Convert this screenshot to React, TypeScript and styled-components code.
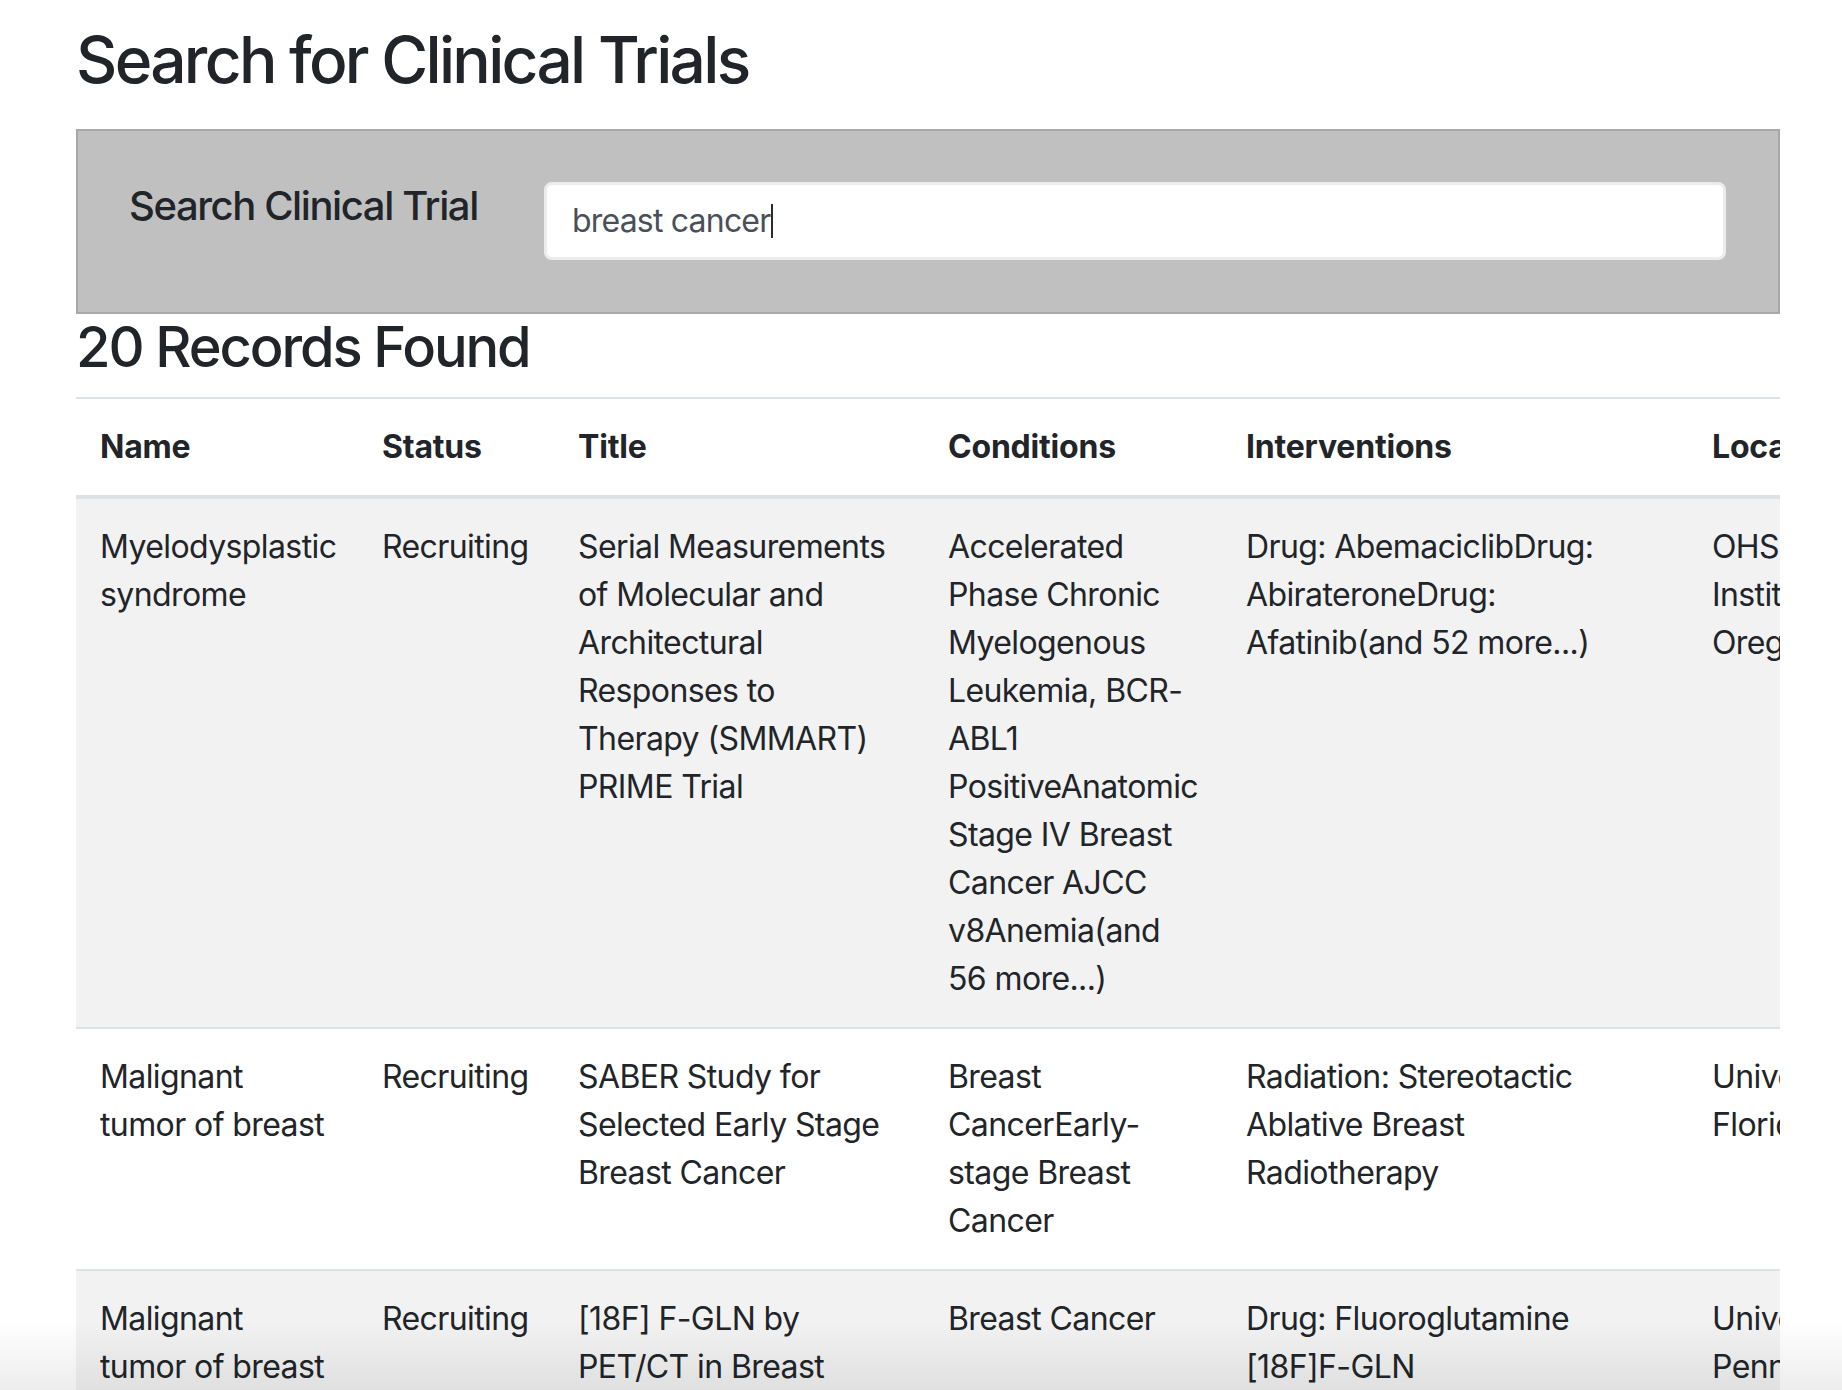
import React from "react";
import styled, { createGlobalStyle } from "styled-components";

const GlobalStyle = createGlobalStyle`
  html, body {
    margin: 0;
    padding: 0;
    background: #ffffff;
  }
  body {
    font-family: Inter, "Noto Sans", "Liberation Sans", Arial, sans-serif;
    color: #212529;
    font-size: 32px;
    line-height: 1.5;
    letter-spacing: -0.6px;
  }
  * { box-sizing: border-box; }
`;

const Page = styled.main`
  padding: 22px 62px 0 76px;
`;

const PageTitle = styled.h1`
  margin: 0 0 30px;
  font-size: 64px;
  font-weight: 500;
  line-height: 1.2;
  letter-spacing: -2.7px;
`;

const SearchPanel = styled.section`
  display: flex;
  align-items: flex-start;
  background: #c0c0c0;
  border: 2px solid #a8a8a8;
  padding: 51px 52px 52px 51px;
`;

const SearchLabel = styled.label`
  flex: 0 0 415px;
  font-size: 40px;
  font-weight: 500;
  line-height: 1.2;
  letter-spacing: -1.4px;
`;

const SearchField = styled.div`
  flex: 1;
  display: flex;
  align-items: center;
  height: 78px;
  padding: 0 25px;
  background: #ffffff;
  border: 3px solid #ececec;
  border-radius: 8px;
  font-size: 32px;
  letter-spacing: -0.8px;
  color: #495057;
`;

const Caret = styled.span`
  display: inline-block;
  width: 2px;
  height: 34px;
  margin-left: 1px;
  background: #2b2b2b;
`;

const RecordsHeading = styled.h2`
  margin: 0 0 16px;
  font-size: 56px;
  font-weight: 500;
  line-height: 1.2;
  letter-spacing: -2.1px;
`;

const TableWrap = styled.div`
  width: 1704px;
  overflow: hidden;
`;

const Table = styled.table`
  width: 2250px;
  table-layout: fixed;
  border-collapse: collapse;
`;

const HeadCell = styled.th<{ $w: number }>`
  width: ${(p) => p.$w}px;
  padding: 24px;
  text-align: left;
  font-weight: 700;
  font-size: 32px;
  line-height: 48px;
  letter-spacing: -0.2px;
  border-top: 2px solid #dee2e6;
  border-bottom: 4px solid #dee2e6;
`;

const Row = styled.tr<{ $striped: boolean }>`
  background: ${(p) => (p.$striped ? "#f2f2f2" : "transparent")};
`;

const Cell = styled.td<{ $padRight?: number }>`
  padding: 24px ${(p) => p.$padRight ?? 24}px 24px 24px;
  vertical-align: top;
  font-size: 32px;
  line-height: 48px;
  border-top: 2px solid #dee2e6;
`;

const LocationLine = styled.div`
  white-space: nowrap;
`;

const BottomFade = styled.div`
  position: fixed;
  left: 0;
  right: 0;
  bottom: 0;
  height: 70px;
  pointer-events: none;
  background: linear-gradient(to bottom, rgba(0, 0, 0, 0), rgba(0, 0, 0, 0.07));
`;

type Trial = {
  name: string;
  status: string;
  title: string;
  conditions: string;
  interventions: string;
  location: string[];
};

const columns: { label: string; width: number }[] = [
  { label: "Name", width: 282 },
  { label: "Status", width: 196 },
  { label: "Title", width: 370 },
  { label: "Conditions", width: 298 },
  { label: "Interventions", width: 466 },
  { label: "Location", width: 638 },
];

const trials: Trial[] = [
  {
    name: "Myelodysplastic syndrome",
    status: "Recruiting",
    title:
      "Serial Measurements of Molecular and Architectural Responses to Therapy (SMMART) PRIME Trial",
    conditions:
      "Accelerated Phase Chronic Myelogenous Leukemia, BCR-ABL1 PositiveAnatomic Stage IV Breast Cancer AJCC v8Anemia(and 56 more...)",
    interventions: "Drug: AbemaciclibDrug: AbirateroneDrug: Afatinib(and 52 more...)",
    location: ["OHSU Knight Cancer", "Institute", "Oregon Health & Science University"],
  },
  {
    name: "Malignant tumor of breast",
    status: "Recruiting",
    title: "SABER Study for Selected Early Stage Breast Cancer",
    conditions: "Breast CancerEarly-stage Breast Cancer",
    interventions: "Radiation: Stereotactic Ablative Breast Radiotherapy",
    location: ["University of", "Florida Health Proton Therapy Institute"],
  },
  {
    name: "Malignant tumor of breast",
    status: "Recruiting",
    title: "[18F] F-GLN by PET/CT in Breast Cancer",
    conditions: "Breast Cancer",
    interventions: "Drug: Fluoroglutamine [18F]F-GLN",
    location: ["University of", "Pennsylvania"],
  },
  {
    name: "Breast cancer",
    status: "Recruiting",
    title: "Study of Imaging in Breast Cancer",
    conditions: "Breast Cancer",
    interventions: "Drug: Example",
    location: ["Memorial Sloan Kettering", "Cancer Center"],
  },
];

export default function App() {
  return (
    <>
      <GlobalStyle />
      <Page>
        <PageTitle>Search for Clinical Trials</PageTitle>
        <SearchPanel>
          <SearchLabel>Search Clinical Trial</SearchLabel>
          <SearchField>
            breast cancer
            <Caret />
          </SearchField>
        </SearchPanel>
        <RecordsHeading>20 Records Found</RecordsHeading>
        <TableWrap>
          <Table>
            <thead>
              <tr>
                {columns.map((c) => (
                  <HeadCell key={c.label} $w={c.width}>
                    {c.label}
                  </HeadCell>
                ))}
              </tr>
            </thead>
            <tbody>
              {trials.map((t, i) => (
                <Row key={i} $striped={i % 2 === 0}>
                  <Cell>{t.name}</Cell>
                  <Cell>{t.status}</Cell>
                  <Cell $padRight={36}>{t.title}</Cell>
                  <Cell>{t.conditions}</Cell>
                  <Cell $padRight={37}>{t.interventions}</Cell>
                  <Cell>
                    {t.location.map((l) => (
                      <LocationLine key={l}>{l}</LocationLine>
                    ))}
                  </Cell>
                </Row>
              ))}
            </tbody>
          </Table>
        </TableWrap>
      </Page>
      <BottomFade />
    </>
  );
}
